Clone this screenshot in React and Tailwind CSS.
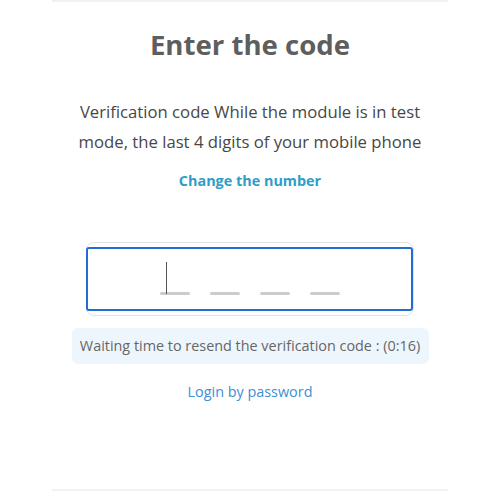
import React from 'react';

const Slot = ({ active }) => (
  <div className="relative w-[30px] h-[32px] flex items-end">
    {active && <div className="absolute left-[6px] bottom-[1px] w-px h-[32px] bg-[#555]" />}
    <div className="w-full h-[3px] rounded-full bg-[#cccccc]" />
  </div>
);

export default function App() {
  return (
    <div className="w-[500px] h-[500px] bg-white flex justify-center font-['Open_Sans',sans-serif]">
      <div className="w-[396px] h-[491px] border-t-2 border-b-2 border-[#f2f2f2] flex flex-col items-center">
        <h1 className="mt-[24px] text-[27.6px] leading-[36px] font-bold text-[#5e5e5e]">Enter the code</h1>
        <p className="mt-[35px] w-[370px] text-center text-[16.7px] leading-[30px] text-[#474747]">
          Verification code While the module is in test mode, the last 4 digits of your mobile phone
        </p>
        <a className="mt-[14px] text-[14.4px] leading-[20px] font-bold text-[#2e9dc8]">Change the number</a>
        <div className="mt-[51px] w-[328px] h-[74px] rounded-lg border border-[#e3e3e3] flex items-center">
          <div className="w-[330px] -ml-px h-[64px] rounded-[3px] border-2 border-[#1f6fd0] flex justify-center items-end pb-[14px] gap-[20px]">
            <Slot active />
            <Slot />
            <Slot />
            <Slot />
          </div>
        </div>
        <div className="mt-[12px] w-[357px] h-[36px] rounded-md bg-[#eef6fd] flex items-center justify-center text-[14.4px] text-[#666666]">
          Waiting time to resend the verification code : (0:16)
        </div>
        <a className="mt-[17px] text-[14.4px] leading-[22px] text-[#3d8fd6]">Login by password</a>
      </div>
    </div>
  );
}
